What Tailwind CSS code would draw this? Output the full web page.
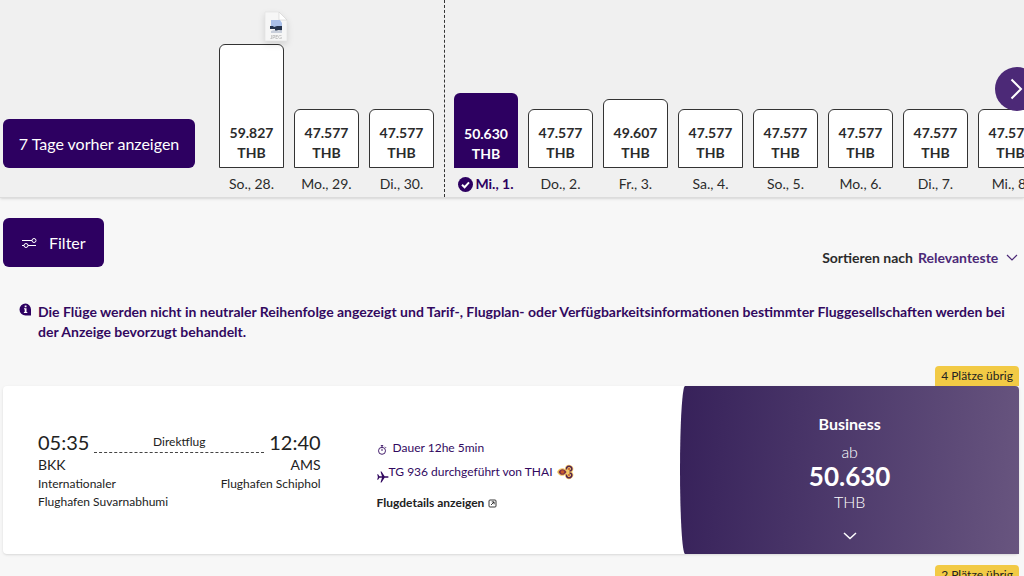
<!doctype html>
<html lang="de">
<head>
    <meta charset="utf-8">
    <meta name="viewport" content="width=device-width, initial-scale=1.0">
    <title>Flugauswahl</title>
    <script src="https://cdn.jsdelivr.net/npm/@tailwindcss/browser@4"></script>
</head>
<body class="bg-[#f7f7f7] font-[Lato,'Open_Sans',sans-serif] text-sm leading-5 text-[#2b2b2b] overflow-hidden h-screen">

<!-- price per day -->
<header class="relative flex items-end gap-6 pl-[3px] bg-[#f0f0f0] border-b border-[#dcdcdc] shadow-sm overflow-hidden">
    <button class="shrink-0 w-48 h-[49px] mb-[29px] rounded-md bg-[#2d0061] text-white text-base whitespace-nowrap">7 Tage vorher anzeigen</button>

    <ul id="days" class="flex items-end gap-2.5 text-center"></ul>

    <button aria-label="Weitere Tage" class="absolute -right-[15px] top-[67px] size-11 rounded-full bg-[#4c2977] text-white">
        <svg class="size-11" viewBox="0 0 44 44" fill="none" stroke="currentColor" stroke-width="2">
            <path d="M16.500 12.500l9.500 9.500-9.500 9.500"/>
        </svg>
    </button>

    <!-- dragged file -->
    <svg class="absolute left-[264px] top-[11px] w-6 h-[31px] drop-shadow-md" viewBox="0 0 24 31">
        <path d="M1 1h14l8 8v21H1z" fill="#f6f6f6" stroke="#e0e0e0" stroke-width=".6"/>
        <path d="M15 1v8h8z" fill="#fff" stroke="#d0d0d0" stroke-width=".6"/>
        <path d="M7 9h9l2 3v5H7z" fill="#a9bfe8"/>
        <path d="M6 15h3l1 1 3-1h5v5l-3-1-4 1v-2H6z" fill="#26354f"/>
        <path d="M7 20l3-1 3 1 5-1v3H7z" fill="#c9cfdb"/>
        <text x="12" y="28" text-anchor="middle" font-size="5" fill="#aaa">JPEG</text>
    </svg>
</header>

<main class="pl-[3px] pr-[5px] pt-5">
    <div class="flex items-start justify-between">
        <button class="flex items-center gap-3 h-[49px] px-[18px] rounded-md bg-[#2d0061] text-white text-base">
            <svg class="w-4 h-3" viewBox="0 0 16 12" fill="none" stroke="currentColor">
                <path d="M1 3.500h10M7 8.500h8M1 8.500h2"/>
                <circle cx="13" cy="3.500" r="2"/>
                <circle cx="5" cy="8.500" r="2"/>
            </svg>
            Filter
        </button>
        <div class="flex items-center gap-[5px] pt-[30px] font-bold">
            <label for="sort">Sortieren nach</label>
            <div class="relative">
                <select id="sort" class="appearance-none bg-transparent pr-5 text-[#4c2977] font-bold">
                    <option>Relevanteste</option>
                </select>
                <svg class="absolute right-0 top-1 w-3.5 h-3 pointer-events-none" viewBox="0 0 14 12" fill="none" stroke="#4c2977" stroke-width="1.200">
                    <path d="M2 3l5 5 5-5"/>
                </svg>
            </div>
        </div>
    </div>

    <div class="flex gap-[6px] pl-4 pr-3 mt-[34px] text-[#32095f] font-bold">
        <svg class="shrink-0 size-[13px] mt-px" viewBox="0 0 13 13">
            <path d="M6.500.5a6 6 0 1 0 0 12h5.500V6.500a6 6 0 0 0-5.500-6z" fill="#2d0061"/>
            <path d="M5.700 2.600h1.800v1.600H5.700zM5 5.300h2.500v3.800h.8v1H4.900v-1h.8V6.300H5z" fill="#fff"/>
        </svg>
        <p>Die Flüge werden nicht in neutraler Reihenfolge angezeigt und Tarif-, Flugplan- oder Verfügbarkeitsinformationen bestimmter Fluggesellschaften werden bei der Anzeige bevorzugt behandelt.</p>
    </div>

    <section class="mt-6">
        <div class="flex justify-end">
            <span class="rounded-t bg-[#f2ca45] px-1.5 text-xs leading-5 text-[#222]">4 Plätze übrig</span>
        </div>
        <article class="flex bg-white rounded shadow">
            <div class="flex w-2/3 gap-14 pl-[35px]">
                <div class="w-[44%] shrink-0 pt-11 text-[#222]">
                    <div class="flex gap-[5px]">
                        <span class="text-xl leading-[25px]">05:35</span>
                        <span class="grow h-[23px] border-b border-dashed border-[#444] text-center text-xs leading-6">Direktflug</span>
                        <span class="text-xl leading-[25px]">12:40</span>
                    </div>
                    <div class="flex justify-between">
                        <span>BKK</span>
                        <span>AMS</span>
                    </div>
                    <div class="flex justify-between text-xs leading-[18px]">
                        <span>Internationaler<br>Flughafen Suvarnabhumi</span>
                        <span>Flughafen Schiphol</span>
                    </div>
                </div>

                <div class="pt-[54px] whitespace-nowrap text-xs text-[#32095f]">
                    <p class="flex items-center leading-4">
                        <svg class="size-2.5 mr-[6px] mt-1" viewBox="0 0 10 10" fill="none" stroke="currentColor" stroke-width=".9">
                            <circle cx="5" cy="5.800" r="3.500"/>
                            <path d="M3.800.6h2.400M5 .6v1.700M5 3.800v2.200M8 1.800l1 1"/>
                        </svg>
                        Dauer 12he 5min
                    </p>
                    <p class="flex items-center mt-[5px]">
                        <svg class="size-3 mt-2.5" viewBox="0 0 12 12" fill="currentColor">
                            <path d="M.2 3.200h.9l1.300 2H5L3.500.6h1l3.100 4.600h2.600c1.900 0 1.900 1.600 0 1.600H7.600l-3.100 4.600h-1L5 6.800H2.400l-1.300 2H.2L.9 6z"/>
                        </svg>
                        TG 936 durchgeführt von THAI
                        <svg class="w-[18px] h-4 ml-[3px]" viewBox="0 0 18 16">
                            <path d="M1 8c2-5 7-4 8-3C9 1 13 0 15 1.500c3 1 3 5 1 6.500 2 1.500 2 5-1 6.500-2 1.500-6 .5-6-3.500-1 1-6 2-8-3z" fill="#f3c766"/>
                            <path d="M2.500 8c2-4 6-3.500 8 0-2 3.500-6 4-8 0z" fill="#7b3048"/>
                            <path d="M10.500 5.500C10 2.500 13 1.500 15 3c1.500 1.500 1 4-1.500 4M10.500 10.500c-.5 3 2.500 4 4.500 2.500 1.500-1.500 1-4-1.500-4" fill="none" stroke="#55234f" stroke-width="1.600"/>
                            <circle cx="13" cy="5" r="1" fill="#c75a28"/>
                            <circle cx="13" cy="11" r="1" fill="#c75a28"/>
                            <circle cx="6.500" cy="8" r="1.800" fill="#c75a28"/>
                        </svg>
                    </p>
                    <a href="#" class="flex items-center gap-1 mt-3 font-bold text-[#222]">
                        Flugdetails anzeigen
                        <svg class="size-[9px]" viewBox="0 0 9 9" fill="none" stroke="currentColor" stroke-width=".9">
                            <rect x="1" y="1" width="7" height="7" rx="1"/>
                            <path d="M3 6l3-3M3.700 2.900h2.400v2.400"/>
                        </svg>
                    </a>
                </div>
            </div>

            <button class="flex flex-col items-center w-1/3 pt-7 pb-2.5 rounded-[5px_4px_0_5px/50%_4px_0_50%] bg-linear-95 from-[#37215a] to-[#68557f] text-white">
                <span class="text-base leading-5 font-bold">Business</span>
                <span class="mt-2 text-base leading-5 font-light">ab</span>
                <span class="text-[26px] leading-7 font-bold">50.630</span>
                <span class="mt-0.5 text-base leading-5 font-light">THB</span>
                <svg class="w-3.5 h-2 mt-5 mb-1" viewBox="0 0 14 8" fill="none" stroke="currentColor" stroke-width="1.500">
                    <path d="M1 1l6 5.500L13 1"/>
                </svg>
            </button>
        </article>
    </section>

    <section class="mt-[11px]">
        <div class="flex justify-end">
            <span class="rounded-t bg-[#f2ca45] px-1.5 text-xs leading-5 text-[#222]">2 Plätze übrig</span>
        </div>
        <article class="h-40 bg-white rounded shadow"></article>
    </section>
</main>

<script>
    // null marks the boundary between two months
    const days = [
        {label: 'So., 28.', price: '59.827', height: 124},
        {label: 'Mo., 29.', price: '47.577', height: 59},
        {label: 'Di., 30.', price: '47.577', height: 59},
        null,
        {label: 'Mi., 1.', price: '50.630', height: 75, selected: true},
        {label: 'Do., 2.', price: '47.577', height: 59},
        {label: 'Fr., 3.', price: '49.607', height: 69},
        {label: 'Sa., 4.', price: '47.577', height: 59},
        {label: 'So., 5.', price: '47.577', height: 59},
        {label: 'Mo., 6.', price: '47.577', height: 59},
        {label: 'Di., 7.', price: '47.577', height: 59},
        {label: 'Mi., 8.', price: '47.577', height: 59},
    ]

    const check = `<svg class="size-[15px]" viewBox="0 0 15 15"><circle cx="7.500" cy="7.500" r="7.500" fill="#2d0061"/><path d="M4 7.700l2.600 2.500L11 5.300" fill="none" stroke="#fff" stroke-width="2"/></svg>`

    document.getElementById('days').innerHTML = days.map(day => {
        if (!day) return '<li class="self-stretch -mr-px border-l border-dashed border-[#333]"></li>'

        const width = day.selected ? 'w-16' : 'w-[65px]'
        const bar = day.selected ? 'bg-[#2d0061] text-white' : 'bg-white border border-[#333]'
        const label = day.selected ? 'font-bold text-[#2d0061]' : ''
        return `
            <li class="shrink-0 ${width} pt-11 pb-[3px]">
                <button class="flex flex-col justify-end items-center w-full pb-1 rounded-t-md font-bold ${bar}" style="height: ${day.height}px">
                    <span>${day.price}</span>
                    <span>THB</span>
                </button>
                <p class="flex items-center justify-center gap-0.5 mt-1.5 whitespace-nowrap ${label}">${day.selected ? check : ''}${day.label}</p>
            </li>`
    }).join('')
</script>
</body>
</html>
